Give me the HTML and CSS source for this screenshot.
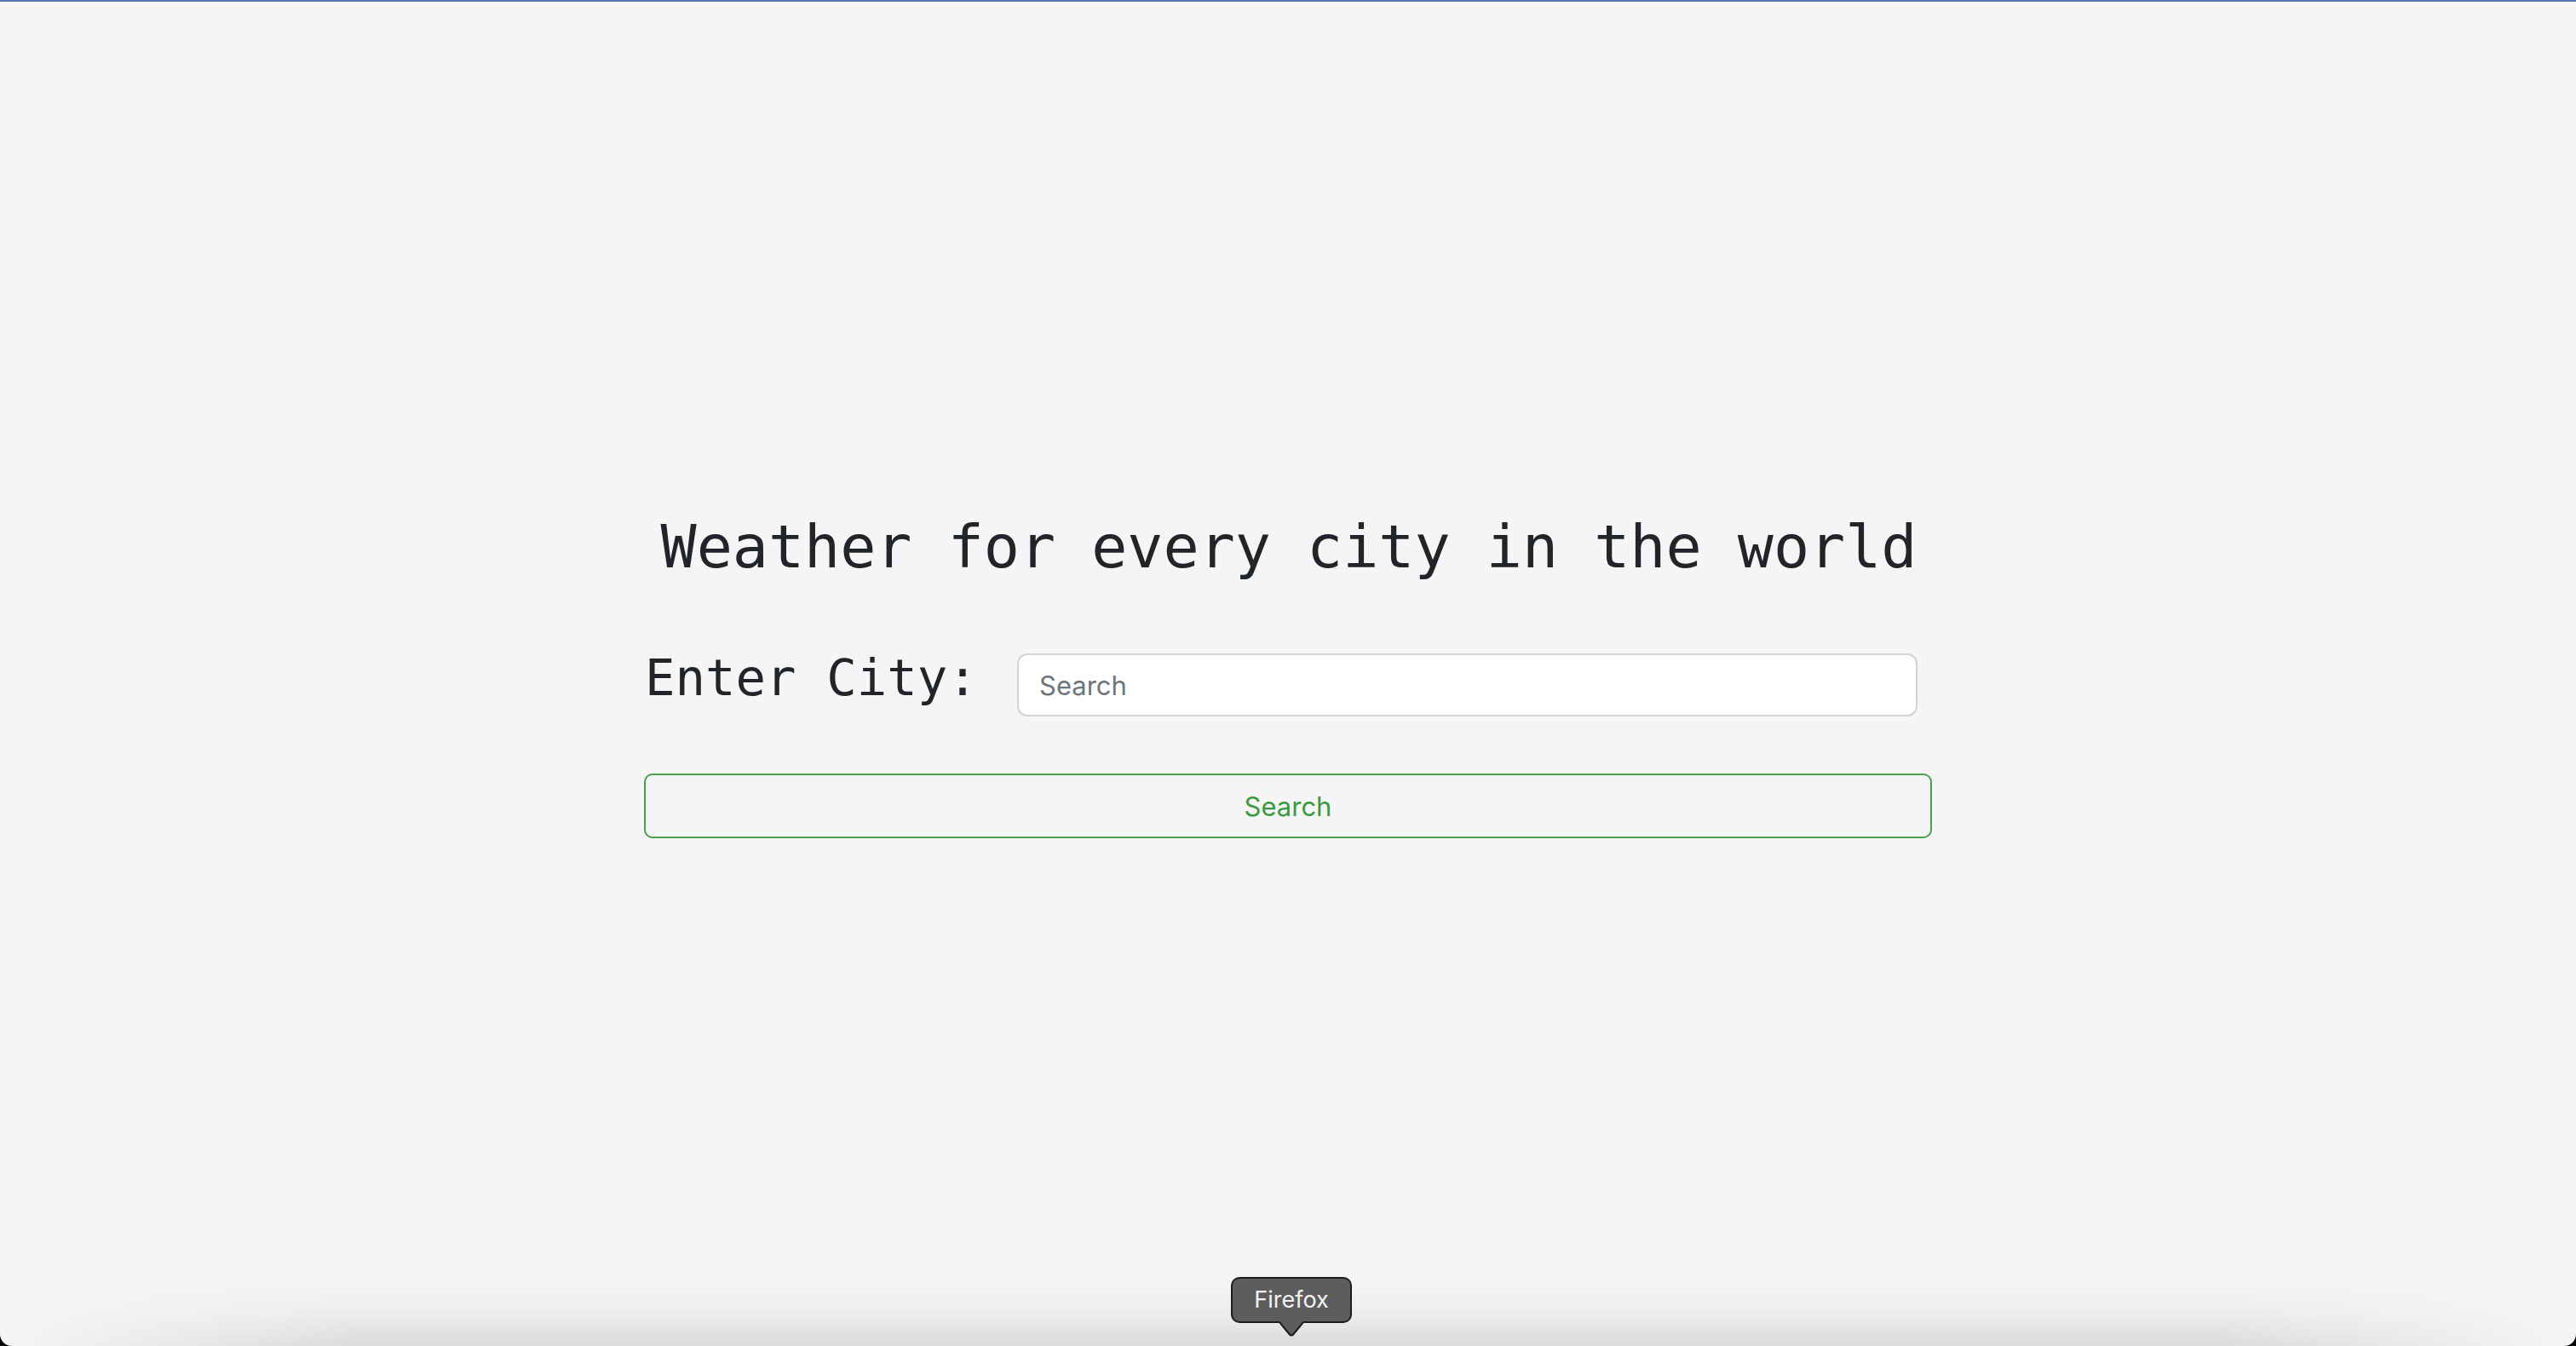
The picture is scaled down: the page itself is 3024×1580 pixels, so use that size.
FILE: index.html
```html
<!DOCTYPE html>
<html lang="en">
<head>
<meta charset="utf-8">
<title>Weather</title>
<link rel="stylesheet" href="styles.css">
</head>
<body>
<div class="window">
  <div class="topline"></div>
  <main class="main">
    <div class="content">
      <h1 class="title">Weather for every city in the world</h1>
      <div class="form-row">
        <label class="label" for="city">Enter City:</label>
        <input id="city" class="input" type="text" placeholder="Search">
      </div>
      <button class="btn" type="button">Search</button>
    </div>
  </main>
  <div class="dock-shadow"></div>
  <div class="tooltip">
    <span class="tooltip-text">Firefox</span>
    <svg class="tooltip-arrow" width="30" height="20" viewBox="0 0 30 20">
      <path d="M1 0 L12.5 15 Q15 18 17.5 15 L29 0 Z" fill="#5d5d5f"/>
      <path d="M1 1 L12.5 15 Q15 18 17.5 15 L29 1" fill="none" stroke="#1c1c1c" stroke-width="2"/>
    </svg>
  </div>
</div>
</body>
</html>
```

FILE: styles.css
```css
html, body {
  margin: 0;
  padding: 0;
  background: #000;
}

.window {
  position: relative;
  width: 3024px;
  height: 1580px;
  background: #f5f5f5;
  border-radius: 0 0 14px 14px;
  overflow: hidden;
  display: flex;
  flex-direction: column;
}

.topline {
  height: 2px;
  background: #5479ad;
  flex: none;
}

.main {
  flex: 1;
  display: flex;
  justify-content: center;
  align-items: flex-start;
  padding-top: 598px;
  box-sizing: border-box;
}

.content {
  width: 1512px;
  display: flex;
  flex-direction: column;
}

.title {
  margin: 0;
  font-family: "DejaVu Sans Mono", "Liberation Mono", monospace;
  font-weight: 400;
  font-size: 70px;
  line-height: 84px;
  color: #212529;
  text-align: center;
  padding-left: 2px;
}

.form-row {
  display: flex;
  align-items: flex-start;
  margin-top: 83px;
}

.label {
  font-family: "DejaVu Sans Mono", "Liberation Mono", monospace;
  font-size: 59px;
  line-height: 58px;
  color: #212529;
  padding-left: 1px;
  width: 437px;
  flex: none;
  white-space: nowrap;
}

.input {
  width: 1057px;
  height: 74px;
  box-sizing: border-box;
  border: 2px solid #d0d4d9;
  border-radius: 12px;
  background: #fff;
  padding: 0 24px;
  font-family: Inter, "Liberation Sans", sans-serif;
  font-size: 31px;
  color: #495057;
  outline: none;
}

.input::placeholder {
  color: #6c757d;
}

.btn {
  margin-top: 67px;
  width: 1512px;
  height: 76px;
  box-sizing: border-box;
  border: 2px solid #4b9f4b;
  border-radius: 10px;
  background: transparent;
  color: #3a9a3e;
  font-family: Inter, "Liberation Sans", sans-serif;
  font-size: 31px;
  padding: 0;
  cursor: pointer;
}

.dock-shadow {
  position: absolute;
  left: 0;
  right: 0;
  bottom: 0;
  height: 80px;
  background: linear-gradient(to bottom, rgba(0,0,0,0) 0%, rgba(0,0,0,0.03) 50%, rgba(0,0,0,0.1) 100%);
  -webkit-mask-image: linear-gradient(to right, transparent 0px, #000 420px, #000 2604px, transparent 3024px);
  mask-image: linear-gradient(to right, transparent 0px, #000 420px, #000 2604px, transparent 3024px);
  pointer-events: none;
}

.tooltip {
  position: absolute;
  left: 1445px;
  top: 1499px;
  width: 142px;
  height: 54px;
  box-sizing: border-box;
  background: #5d5d5f;
  border: 2px solid #1c1c1c;
  border-radius: 10px;
  display: flex;
  align-items: center;
  justify-content: center;
}

.tooltip-text {
  font-family: Inter, "Liberation Sans", sans-serif;
  font-size: 27px;
  color: #f2f2f2;
  line-height: 1;
  margin-top: -2px;
}

.tooltip-arrow {
  position: absolute;
  left: 54px;
  top: 50px;
}
```
